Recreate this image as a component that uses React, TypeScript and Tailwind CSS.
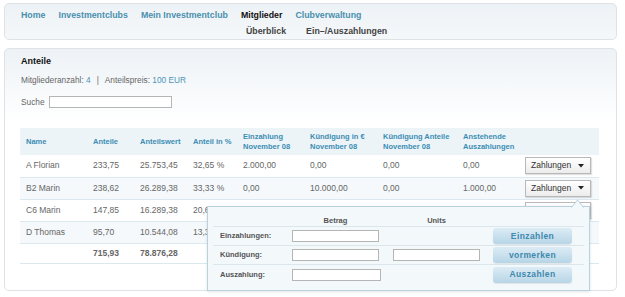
import React from "react";

const rows = [
  { name: "A Florian", anteile: "233,75", wert: "25.753,45", pct: "32,65 %", ein: "2.000,00", kE: "0,00", kA: "0,00", aus: "0,00", btn: true },
  { name: "B2 Marin", anteile: "238,62", wert: "26.289,38", pct: "33,33 %", ein: "0,00", kE: "10.000,00", kA: "0,00", aus: "1.000,00", btn: true },
  { name: "C6 Marin", anteile: "147,85", wert: "16.289,38", pct: "20,67 %", ein: "0,00", kE: "0,00", kA: "0,00", aus: "0,00", btn: true },
  { name: "D Thomas", anteile: "95,70", wert: "10.544,08", pct: "13,35 %", ein: "0,00", kE: "0,00", kA: "0,00", aus: "0,00", btn: false },
];

function ZahlBtn() {
  return (
    <div className="flex h-[17px] w-[66px] items-center justify-between border border-[#b8b8b8] bg-gradient-to-b from-white to-[#ececec] pl-[5px] pr-[6px] text-[8.5px] text-[#333] shadow-[1px_1px_1px_rgba(0,0,0,0.12)]">
      <span>Zahlungen</span>
      <svg width="6" height="4" viewBox="0 0 6 4">
        <path d="M0 0 L6 0 L3 3.5 Z" fill="#222" />
      </svg>
    </div>
  );
}

function PopBtn({ label }: { label: string }) {
  return (
    <div className="flex h-[16px] w-[79px] items-center justify-center rounded-[3px] bg-gradient-to-b from-[#dcecf5] to-[#b7d5e6] text-[8.5px] font-bold tracking-[0.4px] text-[#3f89ad] shadow-[0_1px_1px_rgba(0,0,0,0.08)]">
      {label}
    </div>
  );
}

function Inp({ w = "w-[87px]" }: { w?: string }) {
  return <div className={`h-[12px] ${w} border border-[#b5b5b5] bg-white`} />;
}

export default function App() {
  const th = "px-[6px] text-left align-middle whitespace-nowrap font-bold text-[7.5px] leading-[9.5px] text-[#3b8db3]";
  const td = "px-[6px] align-middle whitespace-nowrap text-[8.5px] text-[#666]";
  return (
    <div className="relative h-[297px] w-[625px] overflow-hidden bg-white px-[4px] pt-[3px] font-['Liberation_Sans',Arial,sans-serif]">
      {/* nav */}
      <div className="h-[37px] w-[613px] rounded-[5px] border border-[#dfe3e7] bg-gradient-to-b from-[#edf2f6] to-[#f5f8fa] pl-[16px] pt-[5px]">
        <div className="flex gap-[13px] text-[8.8px] font-bold leading-[12px] text-[#4a90ae]">
          <span>Home</span>
          <span>Investmentclubs</span>
          <span>Mein Investmentclub</span>
          <span className="text-[#111]">Mitglieder</span>
          <span>Clubverwaltung</span>
        </div>
        <div className="mt-[4px] flex gap-[20px] pl-[225px] text-[8.8px] font-bold leading-[12px] text-[#444]">
          <span>Überblick</span>
          <span>Ein–/Auszahlungen</span>
        </div>
      </div>

      {/* main panel */}
      <div className="relative mt-[8px] h-[243px] w-[613px] rounded-[5px] border border-[#dfe3e7] bg-gradient-to-b from-[#edf2f6] via-white via-[30%] to-white pl-[16px] pt-[6px]">
        <div className="text-[9px] font-bold leading-[12px] text-[#111]">Anteile</div>
        <div className="mt-[7px] text-[8.3px] leading-[12px] text-[#666]">
          Mitgliederanzahl: <span className="text-[#4a95b5]">4</span>
          <span className="mx-[6px]">|</span>
          Anteilspreis: <span className="text-[#4a95b5]">100 EUR</span>
        </div>
        <div className="mt-[10px] flex items-center gap-[4px] text-[8.3px] leading-[12px] text-[#666]">
          <span>Suche</span>
          <div className="h-[12px] w-[123px] border border-[#b5b5b5] bg-white" />
        </div>

        <table className="ml-[-1px] mt-[20px] w-[579px] table-fixed border-collapse">
          <colgroup>
            <col className="w-[67px]" />
            <col className="w-[47px]" />
            <col className="w-[53px]" />
            <col className="w-[50px]" />
            <col className="w-[67px]" />
            <col className="w-[73px]" />
            <col className="w-[80px]" />
            <col className="w-[62px]" />
            <col className="w-[80px]" />
          </colgroup>
          <thead>
            <tr className="h-[27px] bg-[#edf4f8]">
              <th className={th}>Name</th>
              <th className={th}>Anteile</th>
              <th className={th}>Anteilswert</th>
              <th className={th}>Anteil in %</th>
              <th className={th}>Einzahlung<br />November 08</th>
              <th className={th}>Kündigung in €<br />November 08</th>
              <th className={th}>Kündigung Anteile<br />November 08</th>
              <th className={th}>Anstehende<br />Auszahlungen</th>
              <th className={th}></th>
            </tr>
          </thead>
          <tbody>
            {rows.map((r, i) => (
              <tr key={r.name} className={`h-[22px] border-b border-[#dce8ef] ${i % 2 === 1 ? "bg-[#f5f9fb]" : "bg-white"}`}>
                <td className={td}>{r.name}</td>
                <td className={td}>{r.anteile}</td>
                <td className={td}>{r.wert}</td>
                <td className={td}>{r.pct}</td>
                <td className={td}>{r.ein}</td>
                <td className={td}>{r.kE}</td>
                <td className={td}>{r.kA}</td>
                <td className={td}>{r.aus}</td>
                <td className="px-[6px] align-middle">{r.btn ? <ZahlBtn /> : null}</td>
              </tr>
            ))}
            <tr className="h-[20px] border-b border-[#dce8ef] bg-white">
              <td className={td}></td>
              <td className={`${td} font-bold text-[#555]`}>715,93</td>
              <td className={`${td} font-bold text-[#555]`}>78.876,28</td>
              <td className={td}></td>
              <td className={td}></td>
              <td className={td}></td>
              <td className={td}></td>
              <td className={td}></td>
              <td className={td}></td>
            </tr>
          </tbody>
        </table>

        {/* popup */}
        <div className="absolute left-[202px] top-[157px] z-10 h-[85px] w-[383px] border border-[#b7d1e0] bg-[#f3f8fb] px-[5px] shadow-[0_1px_3px_rgba(0,0,0,0.1)]">
          <svg className="absolute left-[363px] top-[-8px]" width="14" height="9" viewBox="0 0 14 9">
            <path d="M0.5 8.5 L6.5 0.8 L12.5 8.5" fill="#f3f8fb" stroke="#b7d1e0" strokeWidth="1" />
            <rect x="1" y="8" width="11" height="2" fill="#f3f8fb" />
          </svg>
          <div className="grid grid-cols-[79px_101px_100px_1fr]">
            <div className="col-span-4 grid h-[20px] grid-cols-[79px_101px_100px_1fr] border-b border-[#dce6ed] pt-[9px] text-[7.5px] font-bold leading-[10px] text-[#555]">
              <div />
              <div className="w-[87px] text-center">Betrag</div>
              <div className="w-[87px] text-center">Units</div>
              <div />
            </div>
            {[
              { l: "Einzahlungen:", u: false, b: "Einzahlen", w: "w-[87px]" },
              { l: "Kündigung:", u: true, b: "vormerken", w: "w-[87px]" },
              { l: "Auszahlung:", u: false, b: "Auszahlen", w: "w-[89px]" },
            ].map((r, i) => (
              <div
                key={r.l}
                className={`col-span-4 grid h-[19px] grid-cols-[79px_101px_100px_1fr] items-center ${i < 2 ? "border-b border-[#dce6ed]" : ""}`}
              >
                <div className="pl-[7px] text-[7.5px] font-bold text-[#555]">{r.l}</div>
                <div><Inp w={r.w} /></div>
                <div>{r.u ? <Inp /> : null}</div>
                <div><PopBtn label={r.b} /></div>
              </div>
            ))}
          </div>
        </div>
      </div>
    </div>
  );
}
